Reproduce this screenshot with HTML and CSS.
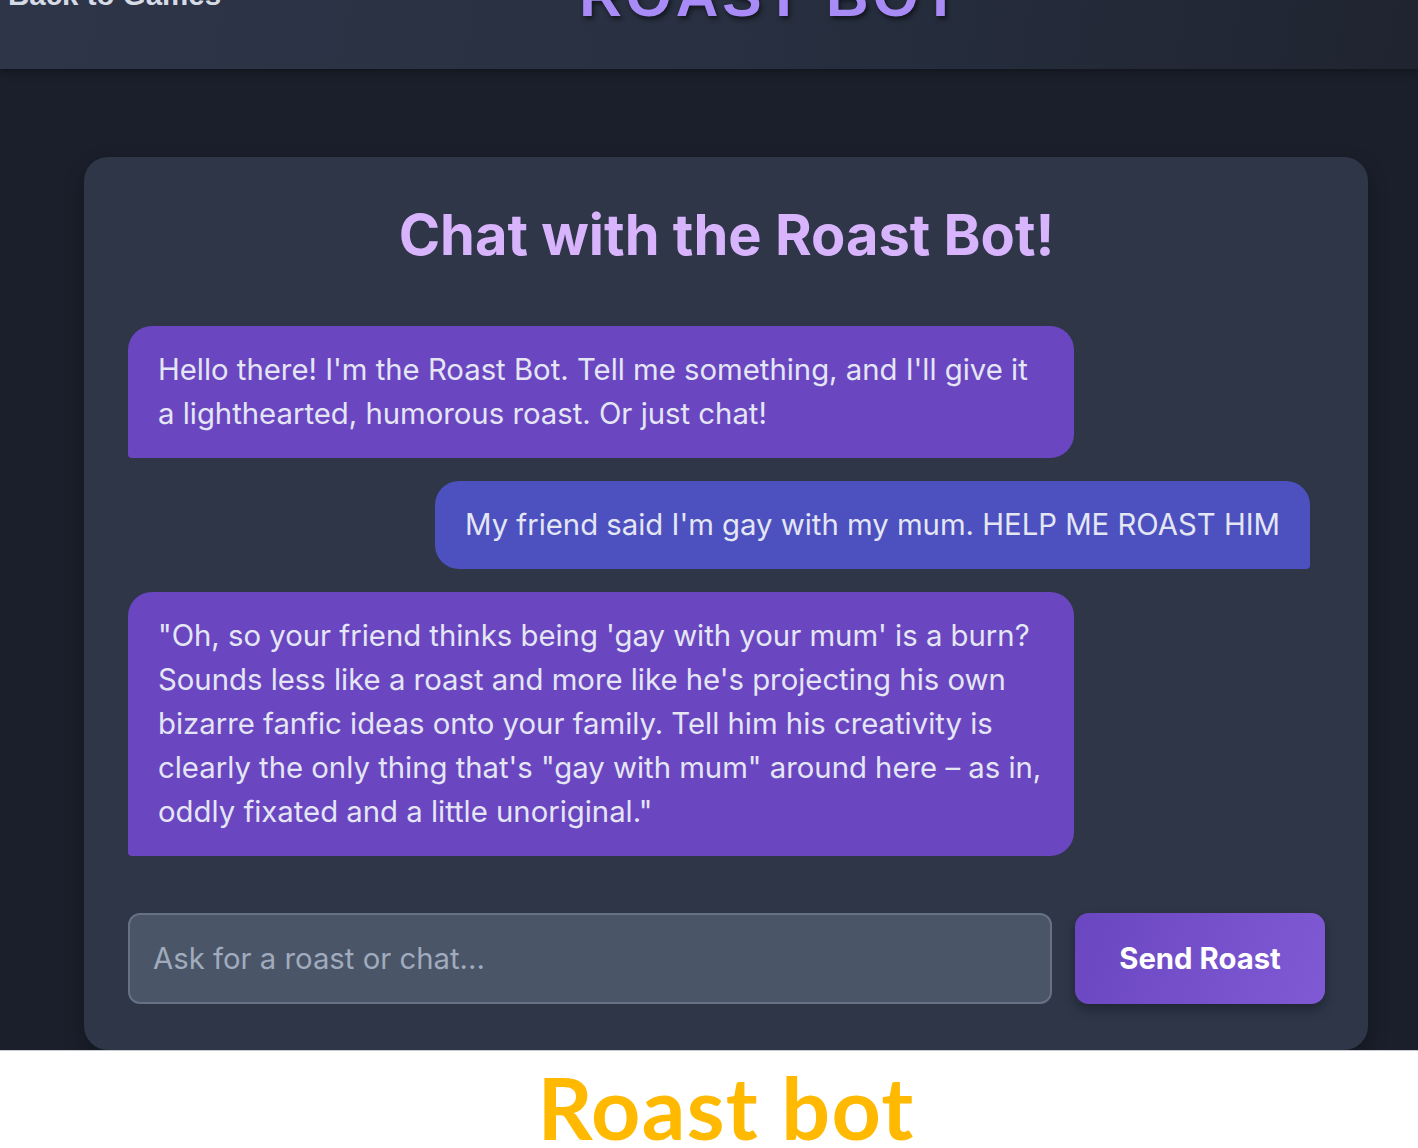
FILE: index.html
```html
<!DOCTYPE html>
<html lang="en">
<head>
<meta charset="utf-8">
<title>Roast Bot</title>
<link rel="stylesheet" href="styles.css">
</head>
<body>
<div class="shot">
  <header class="topbar">
    <a class="back" href="#">Back to Games</a>
    <h1 class="brand">ROAST BOT</h1>
  </header>
  <main class="stage">
    <section class="card">
      <h2 class="card-title">Chat with the Roast Bot!</h2>
      <div class="messages">
        <div class="msg bot">Hello there! I'm the Roast Bot. Tell me something, and I'll give it a lighthearted, humorous roast. Or just chat!</div>
        <div class="msg user">My friend said I'm gay with my mum. HELP ME ROAST HIM</div>
        <div class="msg bot">"Oh, so your friend thinks being 'gay with your mum' is a burn? Sounds less like a roast and more like he's projecting his own bizarre fanfic ideas onto your family. Tell him his creativity is clearly the only thing that's "gay with mum" around here – as in, oddly fixated and a little unoriginal."</div>
      </div>
      <form class="composer">
        <input class="field" type="text" placeholder="Ask for a roast or chat...">
        <button class="send" type="button">Send Roast</button>
      </form>
    </section>
  </main>
</div>
<div class="caption">Roast bot</div>
</body>
</html>
```

FILE: styles.css
```css
* { box-sizing: border-box; }
html, body { margin: 0; padding: 0; }
body {
  background: #ffffff;
  font-family: Inter, "Noto Sans", sans-serif;
  overflow: hidden;
}
.shot {
  background: #1a1f2b;
  height: 1051px;
  overflow: hidden;
  border-bottom: 1px solid #c9ccd1;
}
.topbar {
  height: 69px;
  display: flex;
  align-items: flex-start;
  gap: 358px;
  padding-left: 8px;
  background: linear-gradient(100deg, #2e3548 0%, #283041 50%, #1f2430 100%);
  box-shadow: 0 3px 8px rgba(0, 0, 0, 0.35);
  position: relative;
}
.back {
  font-family: "Liberation Sans", Arial, sans-serif;
  font-weight: 700;
  font-size: 29.5px;
  line-height: 1;
  color: #d5dbe5;
  text-decoration: none;
  margin-top: -20px;
}
.brand {
  margin: -33px 0 0 0;
  font-family: "Liberation Sans", Arial, sans-serif;
  font-weight: 700;
  font-size: 59px;
  line-height: 1;
  letter-spacing: 4px;
  color: #a98bf7;
  text-shadow: 2px 3px 5px rgba(0, 0, 0, 0.55);
}
.stage {
  padding: 88px 0 0 84px;
}
.card {
  width: 1284px;
  height: 893px;
  background: #2e3648;
  border-radius: 24px;
  padding: 44px 43px 46px 44px;
  box-shadow: 0 8px 20px rgba(0, 0, 0, 0.3);
  display: flex;
  flex-direction: column;
}
.card-title {
  margin: 0;
  text-align: center;
  font-size: 56px;
  font-weight: 700;
  line-height: 68px;
  color: #d8b4fc;
}
.messages {
  margin-top: 57px;
  padding-right: 15px;
  display: flex;
  flex-direction: column;
  gap: 23px;
  flex: 1;
}
.msg {
  max-width: 80%;
  padding: 22px 30px;
  font-size: 29.3px;
  line-height: 44px;
  color: #e4e6f4;
}
.msg.bot {
  align-self: flex-start;
  background: #6b46c1;
  border-radius: 24px 24px 24px 4px;
}
.msg.user {
  align-self: flex-end;
  background: #4c51bf;
  border-radius: 24px 24px 4px 24px;
}
.composer {
  display: flex;
  gap: 23px;
  margin: 0;
}
.field {
  flex: 1;
  height: 91px;
  background: #4a5568;
  border: 2px solid #667185;
  border-radius: 12px;
  padding: 0 23px;
  font-family: Inter, "Noto Sans", sans-serif;
  font-size: 29.3px;
  color: #e2e8f0;
  outline: none;
}
.field::placeholder { color: #a0abbd; }
.send {
  width: 250px;
  height: 91px;
  border: none;
  border-radius: 14px;
  background: linear-gradient(110deg, #6b46c1 0%, #805ad5 100%);
  color: #ffffff;
  font-family: Inter, "Noto Sans", sans-serif;
  font-size: 29.3px;
  font-weight: 700;
  box-shadow: 0 6px 12px rgba(0, 0, 0, 0.3);
}
.caption {
  text-align: center;
  font-family: Lato, "Open Sans", sans-serif;
  font-weight: 700;
  font-size: 86px;
  line-height: 1;
  letter-spacing: 1.3px;
  color: #ffb900;
  padding: 13px 0 0 34px;
}
```
